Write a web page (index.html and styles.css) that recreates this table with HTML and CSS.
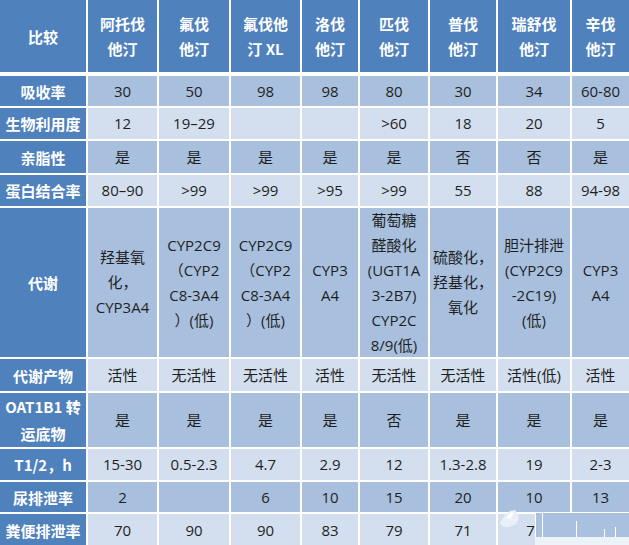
FILE: index.html
```html
<!DOCTYPE html>
<html lang="zh-CN">
<head>
<meta charset="utf-8">
<title>他汀类药物比较</title>
<link rel="stylesheet" href="styles.css">
</head>
<body>
<div class="wrap">
<div class="grid">
  <div class="h first">比较</div>
  <div class="h">阿托伐<br>他汀</div>
  <div class="h">氟伐<br>他汀</div>
  <div class="h">氟伐他<br>汀 XL</div>
  <div class="h">洛伐<br>他汀</div>
  <div class="h">匹伐<br>他汀</div>
  <div class="h">普伐<br>他汀</div>
  <div class="h">瑞舒伐<br>他汀</div>
  <div class="h">辛伐<br>他汀</div>

  <div class="k">吸收率</div>
  <div class="d">30</div><div class="d">50</div><div class="d">98</div><div class="d">98</div><div class="d">80</div><div class="d">30</div><div class="d">34</div><div class="d">60-80</div>

  <div class="k">生物利用度</div>
  <div class="l">12</div><div class="l">19–29</div><div class="l"></div><div class="l"></div><div class="l">&gt;60</div><div class="l">18</div><div class="l">20</div><div class="l">5</div>

  <div class="k">亲脂性</div>
  <div class="d">是</div><div class="d">是</div><div class="d">是</div><div class="d">是</div><div class="d">是</div><div class="d">否</div><div class="d">否</div><div class="d">是</div>

  <div class="k">蛋白结合率</div>
  <div class="l">80–90</div><div class="l">&gt;99</div><div class="l">&gt;99</div><div class="l">&gt;95</div><div class="l">&gt;99</div><div class="l">55</div><div class="l">88</div><div class="l">94-98</div>

  <div class="k">代谢</div>
  <div class="d">羟基氧<br>化，<br>CYP3A4</div>
  <div class="d">CYP2C9<br>（CYP2<br>C8-3A4<br>）(低)</div>
  <div class="d">CYP2C9<br>（CYP2<br>C8-3A4<br>）(低)</div>
  <div class="d">CYP3<br>A4</div>
  <div class="d">葡萄糖<br>醛酸化<br>(UGT1A<br>3-2B7)<br>CYP2C<br>8/9(低)</div>
  <div class="d">硫酸化，<br>羟基化，<br>氧化</div>
  <div class="d">胆汁排泄<br>(CYP2C9<br>-2C19)<br>(低)</div>
  <div class="d">CYP3<br>A4</div>

  <div class="k">代谢产物</div>
  <div class="l">活性</div><div class="l">无活性</div><div class="l">无活性</div><div class="l">活性</div><div class="l">无活性</div><div class="l">无活性</div><div class="l">活性(低)</div><div class="l">活性</div>

  <div class="k">OAT1B1 转<br>运底物</div>
  <div class="d">是</div><div class="d">是</div><div class="d">是</div><div class="d">是</div><div class="d">否</div><div class="d">是</div><div class="d">是</div><div class="d">是</div>

  <div class="k">T1/2，h</div>
  <div class="l">15-30</div><div class="l">0.5-2.3</div><div class="l">4.7</div><div class="l">2.9</div><div class="l">12</div><div class="l">1.3-2.8</div><div class="l">19</div><div class="l">2-3</div>

  <div class="k">尿排泄率</div>
  <div class="d">2</div><div class="d"></div><div class="d">6</div><div class="d">10</div><div class="d">15</div><div class="d">20</div><div class="d">10</div><div class="d">13</div>

  <div class="k">粪便排泄率</div>
  <div class="l">70</div><div class="l">90</div><div class="l">90</div><div class="l">83</div><div class="l">79</div><div class="l">71</div><div class="l shift">7</div><div class="l"></div>
</div>
<svg class="mark" width="140" height="40" viewBox="0 0 140 40" aria-hidden="true">
  <path d="M46 6 L140 6 L140 30 L46 30 Z" fill="#a9c1df"/>
  <rect x="46" y="30" width="94" height="10" fill="#eef3f9"/>
  <path d="M11 16 L16 8 L21 4 L26 3 L28 6 L30 11 L27 17 L20 20 L14 20 Z" fill="#eaf0f8"/>
  <path d="M17 11 L22 5 L25 6 L21 12 Z" fill="#ffffff"/>
  <rect x="46" y="6" width="1" height="24" fill="#ffffff"/>
  <rect x="53" y="6" width="1" height="24" fill="#ffffff"/>
  <rect x="87" y="14" width="1" height="16" fill="#ffffff"/>
  <rect x="115" y="22" width="1" height="8" fill="#ffffff"/>
  <rect x="126" y="20" width="1" height="10" fill="#ffffff"/>
</svg>
</div>
</body>
</html>
```
FILE: styles.css
```css
html, body {
  margin: 0;
  padding: 0;
  background: #ffffff;
}

.wrap {
  position: relative;
  width: 629px;
  height: 545px;
  overflow: hidden;
}

.grid {
  display: grid;
  grid-template-columns: 86px 69px 70px 69px 56px 68px 66px 72px 57px;
  grid-template-rows: 74px 30px 31px 32px 31px 149px 32px 54px 31px 30px 32px;
  column-gap: 2px;
  row-gap: 2px;
  font-family: "Open Sans", "Noto Sans CJK SC", sans-serif;
  font-size: 15px;
  line-height: 25px;
  color: #1f1f1f;
}

.grid > div {
  display: flex;
  align-items: center;
  justify-content: center;
  text-align: center;
}

.h {
  background: #4f81bd;
  color: #ffffff;
  font-weight: bold;
  font-family: "Noto Sans CJK SC", sans-serif;
  height: 72px;
  align-self: start;
}

.k {
  background: #4f81bd;
  color: #ffffff;
  font-weight: bold;
  font-family: "Noto Sans CJK SC", sans-serif;
  white-space: nowrap;
  line-height: 27px;
}

.d {
  background: #a8c0de;
}

.l {
  background: #d3dfee;
}

.shift {
  padding-right: 7px;
}

.mark {
  position: absolute;
  left: 489px;
  top: 507px;
}
```
